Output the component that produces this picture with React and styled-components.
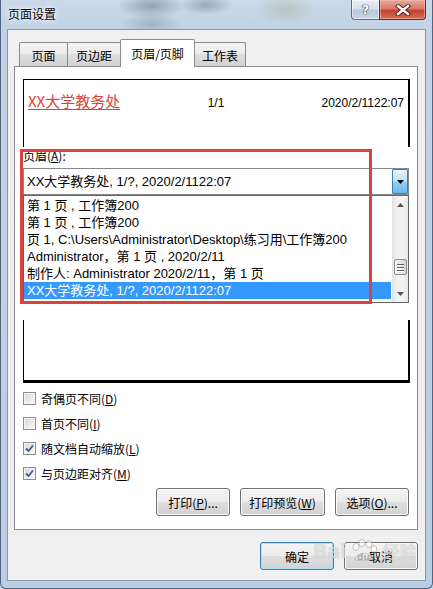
import React from "react";
import styled, { createGlobalStyle, css } from "styled-components";

const GlobalStyle = createGlobalStyle`
  html, body { margin: 0; padding: 0; background: #bfd0e3; }
  body { font-family: "Noto Sans CJK SC", "Liberation Sans", sans-serif; color: #000; }
  * { box-sizing: border-box; }
`;

const UI = `"Liberation Sans", "Noto Sans CJK SC", sans-serif`;

const Window = styled.div`
  position: relative;
  width: 433px;
  height: 589px;
  display: flex;
  flex-direction: column;
  border: 1px solid #52677f;
  border-top: none;
  border-radius: 0 0 6px 6px;
  background:
    radial-gradient(ellipse 34px 12px at 150px 6px, rgba(80, 95, 115, 0.45), transparent),
    radial-gradient(ellipse 26px 10px at 205px 5px, rgba(80, 95, 115, 0.4), transparent),
    radial-gradient(ellipse 30px 14px at 285px 10px, rgba(150, 150, 110, 0.3), transparent),
    radial-gradient(ellipse 30px 12px at 150px 24px, rgba(80, 95, 115, 0.3), transparent),
    linear-gradient(180deg, #cbd9e8 0px, #c2d3e6 30px, #b9cde3 100%);
`;

const TitleBar = styled.div`
  height: 29px;
  display: flex;
  align-items: flex-start;
  padding-left: 7px;
`;

const Title = styled.div`
  margin-top: 6px;
  font-size: 12px;
  line-height: 16px;
  text-shadow: 0 0 6px #fff, 0 0 3px #fff;
`;

const Captions = styled.div`
  margin-left: auto;
  margin-right: 6px;
  display: flex;
`;

const CaptionButton = styled.div`
  height: 20px;
  display: flex;
  align-items: center;
  justify-content: center;
  border: 1px solid #5d6f86;
  border-top: none;
  ${(p) =>
    p.$close
      ? css`
          width: 47px;
          margin-left: -1px;
          border-color: #6d2a22;
          border-radius: 0 0 4px 0;
          background: linear-gradient(180deg, #e9a99f 0%, #d9796d 45%, #c3412f 55%, #d4705a 100%);
          box-shadow: inset 0 0 0 1px rgba(255, 200, 190, 0.5);
        `
      : css`
          width: 29px;
          border-radius: 0 0 0 4px;
          background: linear-gradient(180deg, #e9eff6 0%, #d5e0ec 45%, #b8c9dc 55%, #c9d7e6 100%);
          box-shadow: inset 0 0 0 1px rgba(255, 255, 255, 0.5);
        `}
`;

const HelpGlyph = styled.span`
  font-family: "DejaVu Sans", sans-serif;
  font-weight: bold;
  font-size: 13px;
  line-height: 1;
  color: #fff;
  text-shadow: 0 0 1px #2a3a4f, 0 0 1px #2a3a4f, 0 0 1px #2a3a4f;
`;

const Client = styled.div`
  flex: 1;
  margin: 0 6px 7px 6px;
  border: 1px solid #8398b1;
  background: #f0f0f0;
  padding: 9px 7px 0 6px;
  display: flex;
  flex-direction: column;
`;

const TabStrip = styled.div`
  height: 27px;
  display: flex;
  align-items: flex-end;
  padding-left: 5px;
  position: relative;
  z-index: 2;
`;

const Tab = styled.div`
  width: ${(p) => p.$w}px;
  margin-left: ${(p) => (p.$first ? 0 : -1)}px;
  display: flex;
  align-items: center;
  justify-content: center;
  font-size: 12px;
  border: 1px solid #898c95;
  border-bottom: none;
  border-radius: 2px 2px 0 0;
  ${(p) =>
    p.$active
      ? css`
          height: 28px;
          margin-bottom: -1px;
          background: #fff;
          position: relative;
          z-index: 1;
          padding-bottom: 1px;
        `
      : css`
          height: 24px;
          background: linear-gradient(180deg, #f4f4f4 0%, #ebebeb 50%, #dedede 50%, #d2d2d2 100%);
          padding-top: 1px;
        `}
`;

const Panel = styled.div`
  position: relative;
  height: 464px;
  flex-shrink: 0;
  border: 1px solid #898c95;
  background: #fff;
  display: flex;
  flex-direction: column;
  padding: 12px 7px 0 8px;
`;

const Preview = styled.div`
  flex-shrink: 0;
  border-left: 1px solid #000;
  border-right: 2px solid #000;
  ${(p) =>
    p.$top
      ? css`
          height: 68px;
          border-top: 1px solid #000;
          display: grid;
          grid-template-columns: 1fr auto 1fr;
          align-items: baseline;
          padding: 12px 4px 0 4px;
          align-content: start;
        `
      : css`
          height: 63px;
          border-bottom: 3px solid #000;
        `}
`;

const PreviewLeft = styled.span`
  justify-self: start;
  font-family: "Noto Sans CJK SC", sans-serif;
  font-size: 15px;
  line-height: 18px;
  color: #e0403a;
  text-decoration: underline;
  text-underline-offset: 2px;
`;

const PreviewText = styled.span`
  justify-self: ${(p) => p.$align};
  font-family: "Liberation Sans", sans-serif;
  font-size: 12px;
`;

const Label = styled.div`
  margin-top: 1px;
  font-size: 12px;
  line-height: 16px;
`;

const U = styled.span`
  text-decoration: underline;
  text-underline-offset: 1px;
`;

const Combo = styled.div`
  position: relative;
  margin-top: 4px;
  margin-right: 1px;
  height: 27px;
  flex-shrink: 0;
  display: flex;
  border: 1px solid #858891;
  background: #fff;
  z-index: 3;
`;

const ComboText = styled.div`
  flex: 1;
  padding-left: 3px;
  font-family: ${UI};
  font-size: 13px;
  line-height: 25px;
  white-space: nowrap;
`;

const DropButton = styled.div`
  width: 16px;
  display: flex;
  align-items: center;
  justify-content: center;
  border: 1px solid #3c7fb1;
  border-radius: 1px;
  background: linear-gradient(180deg, #e3f3fc 0%, #c2e4f8 45%, #94cdf0 55%, #6ab8e8 100%);
`;

const DropList = styled.div`
  position: absolute;
  top: calc(100% + 1px);
  left: -1px;
  right: -1px;
  display: flex;
  border: 1px solid #646464;
  background: #fff;
`;

const Items = styled.div`
  flex: 1;
  padding: 1px 1px 3px 0;
  min-width: 0;
`;

const Item = styled.div`
  height: 17px;
  line-height: 17px;
  padding-left: 3px;
  font-family: ${UI};
  font-size: 13px;
  white-space: nowrap;
  overflow: hidden;
  ${(p) =>
    p.$selected &&
    css`
      background: #3399ff;
      color: #fff;
    `}
`;

const ScrollBar = styled.div`
  width: 16px;
  display: flex;
  flex-direction: column;
  border-left: 1px solid #e3e3e3;
  background: linear-gradient(90deg, #e6e6e6 0%, #f2f2f2 30%, #f2f2f2 70%, #e6e6e6 100%);
`;

const ScrollArrow = styled.div`
  height: 17px;
  display: flex;
  align-items: center;
  justify-content: center;
`;

const Track = styled.div`
  flex: 1;
  display: flex;
  flex-direction: column;
  align-items: stretch;
  padding: 0 1px;
`;

const Thumb = styled.div`
  height: 16px;
  border: 1px solid #8e8f8f;
  border-radius: 2px;
  background: linear-gradient(90deg, #f3f3f3 0%, #e8e8e8 50%, #d6d6d6 100%);
  display: flex;
  flex-direction: column;
  align-items: center;
  justify-content: center;
  gap: 2px;
`;

const Grip = styled.span`
  width: 7px;
  height: 1px;
  background: #606060;
  box-shadow: 0 1px 0 #fff;
`;

const RedMark = styled.div`
  position: absolute;
  left: 5px;
  top: 82px;
  width: 352px;
  height: 155px;
  border: 3px solid #d8433f;
  z-index: 10;
  pointer-events: none;
`;

const Hidden = styled.div`
  height: 125px;
  flex-shrink: 0;
`;

const CheckList = styled.div`
  margin-top: 3px;
  display: flex;
  flex-direction: column;
`;

const CheckRow = styled.div`
  height: 25px;
  display: flex;
  align-items: center;
  gap: 5px;
  font-size: 12px;
`;

const Box = styled.span`
  width: 13px;
  height: 13px;
  flex-shrink: 0;
  border: 1px solid #8f8f8f;
  background: linear-gradient(135deg, #d4d6d9 0%, #eeeeee 60%, #f9f9f9 100%);
  box-shadow: inset 0 0 0 1px #f4f4f4;
  display: flex;
  align-items: center;
  justify-content: center;
`;

const ButtonRow = styled.div`
  display: flex;
  justify-content: flex-end;
  gap: 10px;
  ${(p) =>
    p.$inPanel
      ? css`
          margin-top: 2px;
          padding-right: 1px;
        `
      : css`
          margin-top: 12px;
        `}
`;

const Button = styled.div`
  width: ${(p) => p.$w}px;
  height: 28px;
  display: flex;
  align-items: center;
  justify-content: center;
  font-size: 12px;
  border: 1px solid ${(p) => (p.$default ? "#3c7fb1" : "#707070")};
  border-radius: 3px;
  background: linear-gradient(180deg, #f4f4f4 0%, #ececec 50%, #dedede 50%, #d2d2d2 100%);
  box-shadow: inset 0 0 0 1px ${(p) => (p.$default ? "#a9e0f7" : "#fbfbfb")};
`;

const Watermark = styled.div`
  position: absolute;
  left: 312px;
  top: 538px;
  display: flex;
  align-items: center;
  gap: 2px;
  z-index: 20;
  pointer-events: none;
  font-family: "DejaVu Sans", sans-serif;
  font-weight: bold;
  font-size: 19px;
  color: rgba(255, 255, 255, 0.55);
  text-shadow: 0 0 1px rgba(110, 110, 110, 0.45);
`;

const WatermarkCn = styled.span`
  font-family: "Noto Sans CJK SC", sans-serif;
  font-size: 17px;
  margin-left: 2px;
`;

const Arrow = ({ dir = "down", color = "#000", w = 7, h = 4 }) => (
  <svg width={w} height={h} viewBox="0 0 7 4">
    {dir === "down" ? (
      <polygon points="0,0 7,0 3.5,4" fill={color} />
    ) : (
      <polygon points="0,4 7,4 3.5,0" fill={color} />
    )}
  </svg>
);

const CloseGlyph = () => (
  <svg width="18" height="12" viewBox="0 0 18 12">
    <g strokeLinecap="square">
      <path d="M4 2 L14 10 M14 2 L4 10" stroke="#4a1810" strokeWidth="4.2" />
      <path d="M4 2 L14 10 M14 2 L4 10" stroke="#fff" strokeWidth="2.4" />
    </g>
  </svg>
);

const Check = () => (
  <svg width="9" height="9" viewBox="0 0 9 9">
    <path d="M1 4.5 L3.5 7 L8 1.5" fill="none" stroke="#3d5a96" strokeWidth="1.8" />
  </svg>
);

const Paw = () => (
  <svg width="30" height="24" viewBox="0 0 30 24">
    <g fill="rgba(255,255,255,0.55)" stroke="rgba(110,110,110,0.45)" strokeWidth="0.8">
      <ellipse cx="7" cy="8" rx="3" ry="3.6" />
      <ellipse cx="13" cy="4" rx="3" ry="3.6" />
      <ellipse cx="20" cy="5" rx="3" ry="3.6" />
      <ellipse cx="25" cy="10" rx="2.8" ry="3.4" />
      <path d="M6 21 C6 13 24 12 24 21 Z" />
    </g>
    <text x="8" y="21" fontSize="9" fontWeight="bold" fill="rgba(150,150,150,0.6)" fontFamily="DejaVu Sans">du</text>
  </svg>
);

const tabs = [
  { label: "页面", w: 49 },
  { label: "页边距", w: 54 },
  { label: "页眉/页脚", w: 75, active: true },
  { label: "工作表", w: 52 },
];

const items = [
  "第 1 页 , 工作簿200",
  "第 1 页 , 工作簿200",
  "页 1, C:\\Users\\Administrator\\Desktop\\练习用\\工作簿200",
  "Administrator，第 1 页 , 2020/2/11",
  "制作人: Administrator 2020/2/11，第 1 页",
  "XX大学教务处, 1/?, 2020/2/1122:07",
];

const checks = [
  { text: "奇偶页不同", key: "D", checked: false },
  { text: "首页不同", key: "I", checked: false },
  { text: "随文档自动缩放", key: "L", checked: true },
  { text: "与页边距对齐", key: "M", checked: true },
];

const SCROLL_RATIO = 0.82;
const TRACK_FREE = 56;

export default function App() {
  return (
    <>
      <GlobalStyle />
      <Window>
        <TitleBar>
          <Title>页面设置</Title>
          <Captions>
            <CaptionButton>
              <HelpGlyph>?</HelpGlyph>
            </CaptionButton>
            <CaptionButton $close>
              <CloseGlyph />
            </CaptionButton>
          </Captions>
        </TitleBar>
        <Client>
          <TabStrip>
            {tabs.map((t, i) => (
              <Tab key={t.label} $w={t.w} $first={i === 0} $active={t.active}>
                {t.label}
              </Tab>
            ))}
          </TabStrip>
          <Panel>
            <Preview $top>
              <PreviewLeft>XX大学教务处</PreviewLeft>
              <PreviewText $align="center">1/1</PreviewText>
              <PreviewText $align="end">2020/2/1122:07</PreviewText>
            </Preview>
            <Label>
              页眉(<U>A</U>):
            </Label>
            <Combo>
              <ComboText>XX大学教务处, 1/?, 2020/2/1122:07</ComboText>
              <DropButton>
                <Arrow />
              </DropButton>
              <DropList>
                <Items>
                  {items.map((it, i) => (
                    <Item key={i} $selected={i === items.length - 1}>
                      {it}
                    </Item>
                  ))}
                </Items>
                <ScrollBar>
                  <ScrollArrow>
                    <Arrow dir="up" color="#555" />
                  </ScrollArrow>
                  <Track>
                    <Thumb style={{ marginTop: Math.round(TRACK_FREE * SCROLL_RATIO) }}>
                      <Grip />
                      <Grip />
                      <Grip />
                    </Thumb>
                  </Track>
                  <ScrollArrow>
                    <Arrow dir="down" color="#555" />
                  </ScrollArrow>
                </ScrollBar>
              </DropList>
            </Combo>
            <Hidden />
            <Preview />
            <CheckList>
              {checks.map((c) => (
                <CheckRow key={c.key}>
                  <Box>{c.checked && <Check />}</Box>
                  <span>
                    {c.text}(<U>{c.key}</U>)
                  </span>
                </CheckRow>
              ))}
            </CheckList>
            <ButtonRow $inPanel>
              <Button $w={74}>
                打印(<U>P</U>)...
              </Button>
              <Button $w={85}>
                打印预览(<U>W</U>)
              </Button>
              <Button $w={74}>
                选项(<U>O</U>)...
              </Button>
            </ButtonRow>
            <RedMark />
          </Panel>
          <ButtonRow>
            <Button $w={74} $default>
              确定
            </Button>
            <Button $w={74}>取消</Button>
          </ButtonRow>
        </Client>
        <Watermark>
          <span>Bai</span>
          <Paw />
          <WatermarkCn>经验</WatermarkCn>
        </Watermark>
      </Window>
    </>
  );
}
